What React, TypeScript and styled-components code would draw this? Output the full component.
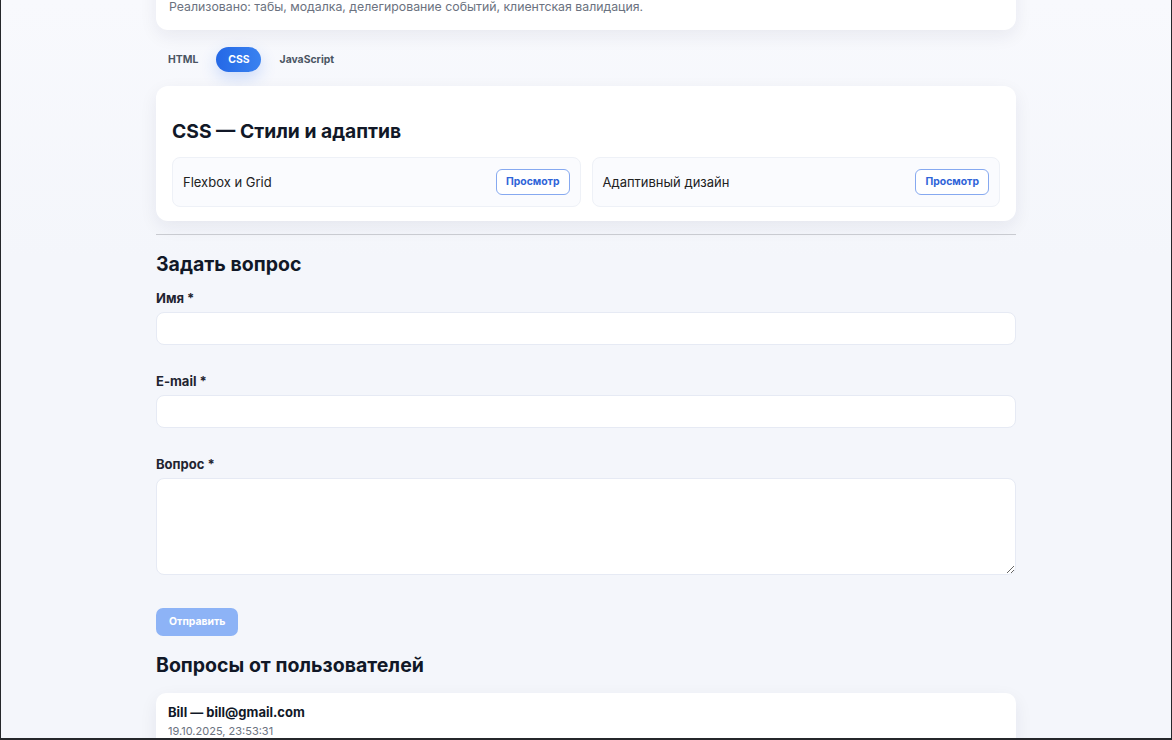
import React, {useState} from 'react'
import styled, {createGlobalStyle} from 'styled-components'

const GlobalStyle = createGlobalStyle`
    html, body {
        margin: 0;
        padding: 0;
        background: #f4f6fb;
    }
    * {
        box-sizing: border-box;
    }
`

const Frame = styled.div`
    height: 740px;
    overflow: hidden;
    border-left: 1px solid #25272b;
    border-right: 1px solid #25272b;
    border-bottom: 2px solid #25272b;
    background: linear-gradient(180deg, #f8f9fd 0%, #f4f6fb 260px, #f4f6fb 100%);
    font-family: Inter, "Noto Sans", sans-serif;
    color: #111827;
`

const Column = styled.main`
    width: 860px;
    margin: -54px auto 0;
    display: flex;
    flex-direction: column;
`

const Card = styled.section`
    background: #fff;
    border-radius: 12px;
    box-shadow: 0 6px 18px rgba(22, 34, 70, 0.07);
    padding: 16px 16px 14px;
`

const IntroTitle = styled.h1`
    margin: 0 0 8px;
    font-size: 22px;
    line-height: 28px;
`

const IntroText = styled.p`
    margin: 0 0 0 -3px;
    font-size: 12.3px;
    line-height: 18px;
    color: #6b7280;
`

const Tabs = styled.nav`
    display: flex;
    gap: 7px;
    margin: 17px 0 14px;
`

const Tab = styled.button<{$active?: boolean}>`
    border: none;
    border-radius: 999px;
    padding: 6px 11px 6px 12px;
    font-family: inherit;
    font-size: 10.4px;
    line-height: 13px;
    font-weight: 700;
    cursor: pointer;
    color: ${p => p.$active ? '#fff' : '#4b5563'};
    background: ${p => p.$active ? 'linear-gradient(90deg, #2468e6, #3a82f0)' : 'transparent'};
    box-shadow: ${p => p.$active ? '0 6px 16px rgba(47, 110, 235, 0.22)' : 'none'};
`

const SectionTitle = styled.h2`
    margin: 17px 0 14px;
    font-size: 19.3px;
    line-height: 24px;
    font-weight: 700;
`

const Grid = styled.div`
    display: grid;
    grid-template-columns: 1fr 1fr;
    gap: 11px;
`

const Item = styled.div`
    display: flex;
    align-items: center;
    justify-content: space-between;
    padding: 11px 10px;
    background: #fafbfe;
    border: 1px solid #eef1f7;
    border-radius: 8px;
    font-size: 13px;
    color: #222;
`

const ViewButton = styled.button`
    border: 1px solid #86a9f0;
    background: #fff;
    border-radius: 6px;
    padding: 6px 9px;
    font-family: inherit;
    font-size: 10.4px;
    line-height: 12px;
    font-weight: 700;
    color: #2f64d8;
`

const Divider = styled.hr`
    border: none;
    border-top: 1px solid #c9cbd1;
    margin: 13px 0 17px;
    width: 100%;
`

const Heading = styled.h2`
    margin: 0;
    font-size: 19.5px;
    line-height: 24px;
    font-weight: 700;
`

const Form = styled.form`
    display: flex;
    flex-direction: column;
    margin-top: 14px;
`

const Field = styled.div`
    display: flex;
    flex-direction: column;
    margin-bottom: 28px;
`

const Label = styled.label`
    font-size: 13px;
    line-height: 16px;
    font-weight: 700;
    color: #1f2430;
    margin-bottom: 6px;
`

const Input = styled.input`
    height: 33px;
    border: 1px solid #e6eaf4;
    border-radius: 8px;
    background: #fff;
    padding: 0 10px;
    font-family: inherit;
    font-size: 13px;
    outline: none;
`

const TextArea = styled.textarea`
    height: 97px;
    border: 1px solid #e6eaf4;
    border-radius: 8px;
    background: #fff;
    padding: 8px 10px;
    font-family: inherit;
    font-size: 13px;
    outline: none;
`

const Submit = styled.button`
    align-self: flex-start;
    margin-top: 5px;
    border: none;
    border-radius: 7px;
    padding: 7px 13px;
    background: #8db3f6;
    color: #fff;
    font-family: inherit;
    font-size: 10.4px;
    line-height: 14px;
    font-weight: 700;
`

const QuestionsTitle = styled(Heading)`
    margin: 17px 0 16px;
`

const Question = styled.article`
    background: #fff;
    border-radius: 10px;
    box-shadow: 0 6px 18px rgba(22, 34, 70, 0.07);
    padding: 11px 12px 12px;
`

const Author = styled.div`
    font-size: 13px;
    line-height: 16px;
    font-weight: 700;
    color: #111827;
`

const Meta = styled.div`
    margin-top: 4px;
    font-size: 11px;
    line-height: 14px;
    color: #6b7280;
`

const tabs = ['HTML', 'CSS', 'JavaScript']

export default function App() {
    const [active, setActive] = useState('CSS')
    return <Frame>
        <GlobalStyle/>
        <Column>
            <Card>
                <IntroTitle>Учебный проект</IntroTitle>
                <IntroText>Реализовано: табы, модалка, делегирование событий, клиентская валидация.</IntroText>
            </Card>
            <Tabs>
                {tabs.map(t => <Tab key={t} $active={t === active} onClick={() => setActive(t)}>{t}</Tab>)}
            </Tabs>
            <Card>
                <SectionTitle>CSS — Стили и адаптив</SectionTitle>
                <Grid>
                    <Item>Flexbox и Grid<ViewButton>Просмотр</ViewButton></Item>
                    <Item>Адаптивный дизайн<ViewButton>Просмотр</ViewButton></Item>
                </Grid>
            </Card>
            <Divider/>
            <Heading>Задать вопрос</Heading>
            <Form onSubmit={e => e.preventDefault()}>
                <Field>
                    <Label>Имя *</Label>
                    <Input/>
                </Field>
                <Field>
                    <Label>E-mail *</Label>
                    <Input type="email"/>
                </Field>
                <Field>
                    <Label>Вопрос *</Label>
                    <TextArea/>
                </Field>
                <Submit disabled>Отправить</Submit>
            </Form>
            <QuestionsTitle>Вопросы от пользователей</QuestionsTitle>
            <Question>
                <Author>Bill — bill@gmail.com</Author>
                <Meta>19.10.2025, 23:53:31</Meta>
            </Question>
        </Column>
    </Frame>
}
